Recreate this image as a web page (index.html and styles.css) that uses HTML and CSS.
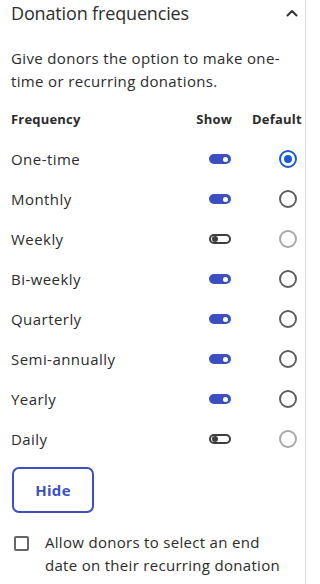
FILE: index.html
```html
<!DOCTYPE html>
<html lang="en">
<head>
<meta charset="utf-8">
<title>Donation frequencies</title>
<link rel="stylesheet" href="styles.css">
</head>
<body>
<section class="panel">
  <header class="panel-head">
    <h2 class="panel-title">Donation frequencies</h2>
    <svg class="chevron" width="12" height="8" viewBox="0 0 12 8" aria-hidden="true"><polyline points="1.5,6.5 6,2 10.5,6.5" fill="none" stroke="#333" stroke-width="2" stroke-linecap="round" stroke-linejoin="round"/></svg>
  </header>
  <p class="desc">Give donors the option to make one-time or recurring donations.</p>
  <div class="table">
    <div class="row head">
      <span class="c-label">Frequency</span>
      <span class="c-show">Show</span>
      <span class="c-default">Default</span>
    </div>
    <div class="row">
      <span class="c-label">One-time</span>
      <span class="c-show"><span class="toggle on"><i></i></span></span>
      <span class="c-default"><span class="radio checked"><i></i></span></span>
    </div>
    <div class="row">
      <span class="c-label">Monthly</span>
      <span class="c-show"><span class="toggle on"><i></i></span></span>
      <span class="c-default"><span class="radio"></span></span>
    </div>
    <div class="row">
      <span class="c-label">Weekly</span>
      <span class="c-show"><span class="toggle off"><i></i></span></span>
      <span class="c-default"><span class="radio disabled"></span></span>
    </div>
    <div class="row">
      <span class="c-label">Bi-weekly</span>
      <span class="c-show"><span class="toggle on"><i></i></span></span>
      <span class="c-default"><span class="radio"></span></span>
    </div>
    <div class="row">
      <span class="c-label">Quarterly</span>
      <span class="c-show"><span class="toggle on"><i></i></span></span>
      <span class="c-default"><span class="radio"></span></span>
    </div>
    <div class="row">
      <span class="c-label">Semi-annually</span>
      <span class="c-show"><span class="toggle on"><i></i></span></span>
      <span class="c-default"><span class="radio"></span></span>
    </div>
    <div class="row">
      <span class="c-label">Yearly</span>
      <span class="c-show"><span class="toggle on"><i></i></span></span>
      <span class="c-default"><span class="radio"></span></span>
    </div>
    <div class="row">
      <span class="c-label">Daily</span>
      <span class="c-show"><span class="toggle off"><i></i></span></span>
      <span class="c-default"><span class="radio disabled"></span></span>
    </div>
  </div>
  <button class="btn-hide" type="button">Hide</button>
  <label class="check">
    <span class="box"></span>
    <span class="check-text">Allow donors to select an end date on their recurring donation</span>
  </label>
</section>
</body>
</html>
```

FILE: styles.css
```css
* { box-sizing: border-box; }
html, body { margin: 0; padding: 0; background: #fff; }
body {
  font-family: "Open Sans", "Liberation Sans", sans-serif;
  color: #2b2b2b;
}
.panel {
  width: 306px;
  height: 584px;
  border-right: 1px solid #d9d9d9;
  overflow: hidden;
  padding-left: 11px;
}
.panel-head {
  display: flex;
  align-items: center;
  justify-content: space-between;
  height: 26px;
  padding-right: 7px;
}
.panel-title {
  margin: 0;
  font-size: 18px;
  font-weight: 400;
  line-height: 26px;
  letter-spacing: -0.15px;
  color: #2e2e2e;
}
.chevron { display: block; }
.desc {
  margin: 21px 0 0;
  font-size: 15px;
  line-height: 23px;
  letter-spacing: 0.35px;
  width: 284px;
}
.table { margin-top: 16px; }
.row {
  display: grid;
  grid-template-columns: 1fr 40px 53px;
  column-gap: 20px;
  align-items: center;
  height: 40px;
  font-size: 15px;
  letter-spacing: 0.45px;
}
.row.head {
  height: 20px;
  margin-bottom: 10px;
  font-size: 13px;
  font-weight: 700;
  line-height: 20px;
  letter-spacing: 0.2px;
  white-space: nowrap;
}
.c-show { display: flex; justify-content: flex-end; }
.c-default { display: flex; justify-content: flex-end; padding-right: 8px; }
.row.head .c-default { justify-content: flex-start; padding-right: 0; }
.toggle {
  display: flex;
  align-items: center;
  width: 22px;
  height: 10px;
  border-radius: 5px;
  margin-right: 1px;
}
.toggle i {
  display: block;
  width: 5px;
  height: 5px;
  border-radius: 50%;
}
.toggle.on {
  background: #3c50c4;
  justify-content: flex-end;
  padding-right: 3px;
}
.toggle.on i { background: #fff; }
.toggle.off {
  background: #fff;
  border: 2px solid #3d3d3d;
  justify-content: flex-start;
  padding-left: 1px;
}
.toggle.off i { background: #3d3d3d; width: 6px; height: 6px; }
.radio {
  display: flex;
  align-items: center;
  justify-content: center;
  width: 18px;
  height: 18px;
  border-radius: 50%;
  border: 2px solid #5f5f5f;
}
.radio.checked { border-color: #1a5ad8; }
.radio.checked i {
  display: block;
  width: 8px;
  height: 8px;
  border-radius: 50%;
  background: #1a5ad8;
}
.radio.disabled { border-color: #a8a8a8; }
.btn-hide {
  display: block;
  margin: 8px 0 0 1px;
  width: 82px;
  height: 46px;
  border: 2px solid #3c50c4;
  border-radius: 7px;
  background: #fff;
  color: #3c50c4;
  font-family: "Open Sans", "Liberation Sans", sans-serif;
  font-size: 15px;
  font-weight: 700;
  letter-spacing: 0.3px;
  padding: 0;
}
.check {
  display: flex;
  align-items: flex-start;
  margin-top: 18px;
  font-size: 15px;
  line-height: 23px;
  letter-spacing: 0.3px;
}
.box {
  flex: none;
  width: 15px;
  height: 15px;
  margin: 5px 0 0 3px;
  border: 2px solid #666;
  border-radius: 2px;
}
.check-text { margin-left: 16px; width: 244px; }
```
